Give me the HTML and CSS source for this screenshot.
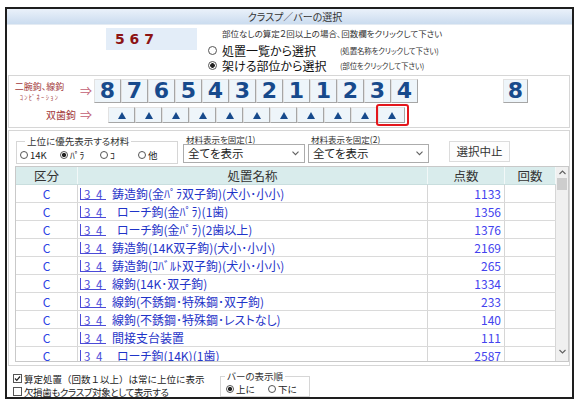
FILE: index.html
```html
<!DOCTYPE html>
<html lang="ja">
<head>
<meta charset="utf-8">
<title>クラスプ／バーの選択</title>
<link rel="stylesheet" href="styles.css">
</head>
<body>
<div class="window">
  <div class="titlebar">クラスプ／バーの選択</div>

  <div class="top">
    <div class="count">5 6 7</div>
    <div class="mode">
      <div class="note">部位なしの算定２回以上の場合、回数欄をクリックして下さい</div>
      <div class="opt"><span class="radio"></span><span class="optlabel">処置一覧から選択</span><span class="hint">(処置名称をクリックして下さい)</span></div>
      <div class="opt"><span class="radio on"></span><span class="optlabel">架ける部位から選択</span><span class="hint">(部位をクリックして下さい)</span></div>
    </div>
  </div>

  <div class="group teeth">
    <div class="trow keyrow">
      <div class="tlabel two"><span class="l1">二腕鉤、線鉤</span><span class="combi">ｺﾝﾋﾞﾈｰｼｮﾝ</span></div>
      <span class="arrow">⇒</span>
      <div class="keys">
        <div class="key">8</div><div class="key">7</div><div class="key">6</div><div class="key">5</div>
        <div class="key">4</div><div class="key">3</div><div class="key">2</div><div class="key">1</div>
        <div class="key">1</div><div class="key">2</div><div class="key">3</div><div class="key">4</div>
      </div>
      <div class="key single">8</div>
    </div>
    <div class="trow trirow">
      <div class="tlabel one">双歯鉤</div>
      <span class="arrow">⇒</span>
      <div class="tris">
        <div class="tri"><svg width="8" height="7" viewBox="0 0 8 7"><polygon points="4,0 8,7 0,7"/></svg></div>
        <div class="tri"><svg width="8" height="7" viewBox="0 0 8 7"><polygon points="4,0 8,7 0,7"/></svg></div>
        <div class="tri"><svg width="8" height="7" viewBox="0 0 8 7"><polygon points="4,0 8,7 0,7"/></svg></div>
        <div class="tri"><svg width="8" height="7" viewBox="0 0 8 7"><polygon points="4,0 8,7 0,7"/></svg></div>
        <div class="tri"><svg width="8" height="7" viewBox="0 0 8 7"><polygon points="4,0 8,7 0,7"/></svg></div>
        <div class="tri"><svg width="8" height="7" viewBox="0 0 8 7"><polygon points="4,0 8,7 0,7"/></svg></div>
        <div class="tri"><svg width="8" height="7" viewBox="0 0 8 7"><polygon points="4,0 8,7 0,7"/></svg></div>
        <div class="tri"><svg width="8" height="7" viewBox="0 0 8 7"><polygon points="4,0 8,7 0,7"/></svg></div>
        <div class="tri"><svg width="8" height="7" viewBox="0 0 8 7"><polygon points="4,0 8,7 0,7"/></svg></div>
        <div class="tri"><svg width="8" height="7" viewBox="0 0 8 7"><polygon points="4,0 8,7 0,7"/></svg></div>
        <div class="tri selected"><svg width="8" height="7" viewBox="0 0 8 7"><polygon points="4,0 8,7 0,7"/></svg><div class="hl"></div></div>
      </div>
    </div>
  </div>

  <div class="group list">
    <div class="filters">
      <fieldset class="prio">
        <legend>上位に優先表示する材料</legend>
        <div class="ropts">
          <span class="ropt w40"><span class="radio sm"></span>14K</span>
          <span class="ropt w40"><span class="radio sm on"></span>ﾊﾟﾗ</span>
          <span class="ropt w38"><span class="radio sm"></span>ｺ</span>
          <span class="ropt"><span class="radio sm"></span>他</span>
        </div>
      </fieldset>
      <div class="fix fix1">
        <div class="fixlabel">材料表示を固定(1)</div>
        <div class="combo"><span>全てを表示</span><svg class="chev" width="7" height="5" viewBox="0 0 7 5"><polyline points="0.5,0.7 3.5,3.7 6.5,0.7"/></svg></div>
      </div>
      <div class="fix fix2">
        <div class="fixlabel">材料表示を固定(2)</div>
        <div class="combo"><span>全てを表示</span><svg class="chev" width="7" height="5" viewBox="0 0 7 5"><polyline points="0.5,0.7 3.5,3.7 6.5,0.7"/></svg></div>
      </div>
      <div class="btn">選択中止</div>
    </div>

    <div class="table">
      <div class="cols">
        <div class="thead">
          <div class="th">区分</div><div class="th">処置名称</div><div class="th">点数</div><div class="th">回数</div>
        </div>
        <div class="tbody">
          <div class="tr"><div class="td kb">C</div><div class="td nm"><span class="site">3 4</span><span class="name">鋳造鉤(金ﾊﾟﾗ双子鉤)(犬小･小小)</span></div><div class="td pt">1133</div><div class="td ct"></div></div>
          <div class="tr"><div class="td kb">C</div><div class="td nm"><span class="site">3 4</span><span class="name ind">ローチ鉤(金ﾊﾟﾗ)(1歯)</span></div><div class="td pt">1356</div><div class="td ct"></div></div>
          <div class="tr"><div class="td kb">C</div><div class="td nm"><span class="site">3 4</span><span class="name ind">ローチ鉤(金ﾊﾟﾗ)(2歯以上)</span></div><div class="td pt">1376</div><div class="td ct"></div></div>
          <div class="tr"><div class="td kb">C</div><div class="td nm"><span class="site">3 4</span><span class="name">鋳造鉤(14K双子鉤)(犬小･小小)</span></div><div class="td pt">2169</div><div class="td ct"></div></div>
          <div class="tr"><div class="td kb">C</div><div class="td nm"><span class="site">3 4</span><span class="name">鋳造鉤(ｺﾊﾞﾙﾄ双子鉤)(犬小･小小)</span></div><div class="td pt">265</div><div class="td ct"></div></div>
          <div class="tr"><div class="td kb">C</div><div class="td nm"><span class="site">3 4</span><span class="name">線鉤(14K･双子鉤)</span></div><div class="td pt">1334</div><div class="td ct"></div></div>
          <div class="tr"><div class="td kb">C</div><div class="td nm"><span class="site">3 4</span><span class="name">線鉤(不銹鋼･特殊鋼･双子鉤)</span></div><div class="td pt">233</div><div class="td ct"></div></div>
          <div class="tr"><div class="td kb">C</div><div class="td nm"><span class="site">3 4</span><span class="name">線鉤(不銹鋼･特殊鋼･レストなし)</span></div><div class="td pt">140</div><div class="td ct"></div></div>
          <div class="tr"><div class="td kb">C</div><div class="td nm"><span class="site">3 4</span><span class="name">間接支台装置</span></div><div class="td pt">111</div><div class="td ct"></div></div>
          <div class="tr"><div class="td kb">C</div><div class="td nm"><span class="site">3 4</span><span class="name ind">ローチ鉤(14K)(1歯)</span></div><div class="td pt">2587</div><div class="td ct"></div></div>
        </div>
      </div>
      <div class="scroll">
        <div class="sb-arrow"><svg width="7" height="5" viewBox="0 0 7 5"><polyline points="0.5,4 3.5,1 6.5,4"/></svg></div>
        <div class="thumb"></div>
        <div class="sb-track"></div>
        <div class="sb-arrow down"><svg width="7" height="5" viewBox="0 0 7 5"><polyline points="0.5,1 3.5,4 6.5,1"/></svg></div>
      </div>
    </div>
  </div>

  <div class="bottom">
    <div class="checks">
      <div class="chk wide"><span class="box"><svg width="7" height="7" viewBox="0 0 7 7"><polyline points="1,3.5 2.8,5.3 6,1.5"/></svg></span><span class="ctext">算定処置（回数１以上）は常に上位に表示</span></div>
      <div class="chk narrow"><span class="box"></span><span class="ctext">欠損歯もクラスプ対象として表示する</span></div>
    </div>
    <fieldset class="bar">
      <legend>バーの表示順</legend>
      <div class="ropts">
        <span class="ropt w42"><span class="radio sm on"></span>上に</span>
        <span class="ropt"><span class="radio sm"></span>下に</span>
      </div>
    </fieldset>
  </div>
</div>
</body>
</html>
```

FILE: styles.css
```css
* { box-sizing: border-box; }

body {
  margin: 0;
  background: #fff;
  font-family: "Noto Sans CJK JP", "Noto Sans", sans-serif;
  font-feature-settings: "palt" 1;
  color: #222;
}

.window {
  margin: 7px 0 0 5px;
  width: 569px;
  height: 392px;
  border: 2px solid #1e1e1e;
  display: flex;
  flex-direction: column;
  background: #fff;
}

.titlebar {
  flex: none;
  height: 16px;
  background: linear-gradient(#eaf1fa, #cbdcef);
  border-bottom: 1px solid #e4ebf3;
  text-align: center;
  font-size: 10px;
  line-height: 15px;
  color: #333;
  padding-left: 11px;
}

/* top area */
.top {
  flex: none;
  height: 50px;
  display: flex;
  padding-top: 3px;
}
.count {
  margin-left: 99px;
  width: 91px;
  height: 22px;
  background: #e3edf8;
  color: #8c1414;
  font-family: "DejaVu Sans", sans-serif;
  font-feature-settings: normal;
  font-weight: bold;
  font-size: 14px;
  line-height: 22px;
  padding-left: 9px;
}
.mode {
  margin-left: 11px;
  display: flex;
  flex-direction: column;
}
.note {
  padding-left: 14px;
  font-size: 8.5px;
  line-height: 10px;
  height: 15px;
  color: #333;
}
.opt {
  display: flex;
  align-items: center;
  height: 15px;
  line-height: 15px;
}
.optlabel {
  margin-left: 5px;
  width: 118px;
  font-size: 12px;
  line-height: 15px;
  color: #111;
}
.hint {
  font-size: 7.5px;
  letter-spacing: -0.2px;
  line-height: 10px;
  color: #333;
}

.radio {
  flex: none;
  display: inline-block;
  width: 9px;
  height: 9px;
  border: 1px solid #555;
  border-radius: 50%;
  background: #fff;
}
.radio.on {
  background: radial-gradient(circle, #222 0 2px, #fff 2.6px);
}
.radio.sm {
  width: 8px;
  height: 8px;
  margin-right: 2px;
}
.radio.sm.on {
  background: radial-gradient(circle, #222 0 1.8px, #fff 2.4px);
}

/* group boxes */
.group {
  flex: none;
  margin: 0 2px 0 1px;
  border: 1px solid #d6d6d6;
}

.teeth {
  height: 53px;
  padding-top: 3px;
  display: flex;
  flex-direction: column;
  gap: 4px;
}
.trow {
  display: flex;
  align-items: center;
}
.keyrow { height: 24px; }
.trirow { height: 16px; }

.tlabel {
  width: 69px;
  color: #a33a3a;
}
.tlabel.two {
  display: flex;
  flex-direction: column;
  align-items: center;
  padding-right: 8px;
}
.tlabel .l1 {
  font-size: 9px;
  line-height: 11px;
}
.tlabel .combi {
  margin-top: 1px;
  font-size: 6.5px;
  letter-spacing: 1.3px;
  font-feature-settings: normal;
  line-height: 9px;
}
.tlabel.one {
  text-align: right;
  padding-right: 2px;
  font-size: 10px;
  line-height: 16px;
}
.arrow {
  width: 16px;
  text-align: center;
  font-size: 12px;
  line-height: 16px;
  color: #c25d72;
  font-feature-settings: normal;
}

.keys { display: flex; }
.key {
  width: 27px;
  height: 24px;
  border: 1px solid;
  border-color: #e2e2e2 #a6a6a6 #a6a6a6 #e2e2e2;
  background: #eef5fa;
  color: #174a8c;
  font-family: "DejaVu Sans", sans-serif;
  font-feature-settings: normal;
  font-weight: bold;
  font-size: 22px;
  line-height: 22px;
  text-align: center;
}
.key.single {
  width: 25px;
  margin-left: 85px;
}

.tris {
  display: flex;
  margin-left: 14px;
}
.tri {
  position: relative;
  width: 27px;
  height: 16px;
  border: 1px solid;
  border-color: #e2e2e2 #a6a6a6 #a6a6a6 #e2e2e2;
  background: #eef5fa;
  display: flex;
  align-items: center;
  justify-content: center;
}
.tri svg { fill: #174a8c; }
.tri .hl {
  position: absolute;
  left: -3px;
  right: -5px;
  top: -4px;
  bottom: -4px;
  border: 2.5px solid #e3161c;
  border-radius: 3px;
}

/* list group */
.list {
  margin-top: 2px;
  height: 236px;
  padding-bottom: 3px;
  display: flex;
  flex-direction: column;
}
.filters {
  height: 35px;
  display: flex;
  align-items: flex-start;
}
fieldset {
  margin: 0;
  padding: 0;
  border: 1px solid #d6d6d6;
  min-width: 0;
}
legend {
  font-size: 9.5px;
  line-height: 11px;
  padding: 0 2px;
  color: #333;
}
.prio {
  margin-left: 7px;
  margin-top: 5px;
  width: 162px;
}
.prio legend { margin-left: 8px; }
.ropts {
  display: flex;
  align-items: center;
  font-size: 9.5px;
  line-height: 12px;
  color: #222;
}
.prio .ropts {
  height: 16px;
  padding-left: 3px;
}
.ropt {
  display: flex;
  align-items: center;
}
.w40 { width: 40px; }
.w38 { width: 38px; }
.w42 { width: 42px; }

.fix {
  margin-top: 4px;
  display: flex;
  flex-direction: column;
}
.fix1 { margin-left: 5px; width: 122px; }
.fix2 { margin-left: 3px; width: 121px; }
.fixlabel {
  height: 9px;
  font-size: 8.5px;
  line-height: 9px;
  padding-left: 3px;
  color: #333;
  white-space: nowrap;
}
.combo {
  height: 19px;
  border: 1px solid #acacac;
  background: #fff;
  display: flex;
  align-items: center;
  justify-content: space-between;
  padding: 0 5px 0 4px;
  font-size: 11.5px;
  line-height: 15px;
  color: #222;
}
.chev polyline, .sb-arrow polyline {
  fill: none;
  stroke: #606060;
  stroke-width: 1.1;
}
.btn {
  margin-left: 20px;
  margin-top: 10px;
  width: 61px;
  height: 21px;
  border: 1px solid #dcdcdc;
  background: #fdfdfd;
  text-align: center;
  font-size: 11.5px;
  line-height: 19px;
  color: #333;
}

/* table */
.table {
  margin-left: 6px;
  width: 554px;
  height: 196px;
  border: 1px solid #c9c9c9;
  display: flex;
}
.cols {
  width: 540px;
  overflow: hidden;
}
.thead, .tr {
  display: grid;
  grid-template-columns: 62px 350px 77px 51px;
  height: 18px;
}
.thead {
  background: #d9ecec;
  border-bottom: 1px solid #c9dede;
}
.th {
  border-right: 1px solid #f2f8f8;
  text-align: center;
  font-size: 12.5px;
  line-height: 17px;
  color: #333;
}
.tr {
  border-bottom: 1px solid #dadada;
}
.td {
  border-right: 1px solid #d6d6d6;
  display: flex;
  align-items: center;
  font-size: 12px;
  line-height: 15px;
  white-space: nowrap;
  overflow: hidden;
}
.kb {
  justify-content: center;
  color: #2c44e4;
}
.nm {
  padding-left: 2px;
  color: #1f34c8;
}
.site {
  display: inline-block;
  flex: none;
  width: 26px;
  height: 12px;
  line-height: 12px;
  border-left: 1px solid #4a4ad8;
  border-bottom: 1px solid #4a4ad8;
  padding-left: 3px;
  word-spacing: 3px;
  color: #4a4ad8;
  margin-right: 6px;
  font-size: 11.5px;
}
.name.ind { padding-left: 5px; }
.pt {
  justify-content: flex-end;
  padding-right: 3px;
  color: #4343ee;
}

.scroll {
  width: 12px;
  background: #f0f0f0;
  display: flex;
  flex-direction: column;
  align-items: center;
}
.sb-arrow {
  height: 11px;
  display: flex;
  align-items: center;
  justify-content: center;
}
.sb-arrow.down { height: 14px; align-items: flex-start; padding-top: 2px; }
.thumb {
  width: 10px;
  height: 12px;
  background: #cdcdcd;
}
.sb-track { flex: 1; }

/* bottom */
.bottom {
  flex: none;
  height: 31px;
  display: flex;
  padding-left: 6px;
}
.checks {
  width: 207px;
  padding-top: 6px;
}
.chk {
  height: 13px;
  display: flex;
  align-items: center;
  color: #222;
  white-space: nowrap;
}
.ctext {
  font-size: 9.5px;
  line-height: 12px;
}
.chk.wide .ctext {
  font-feature-settings: normal;
}
.chk.narrow .ctext {
  letter-spacing: -0.4px;
}
.box {
  flex: none;
  width: 9px;
  height: 9px;
  border: 1px solid #555;
  margin-right: 2px;
  display: flex;
  align-items: center;
  justify-content: center;
  background: #fff;
}
.box polyline {
  fill: none;
  stroke: #222;
  stroke-width: 1.2;
}
.bar {
  margin-top: 5px;
  width: 90px;
  height: 26px;
}
.bar legend { margin-left: 4px; }
.bar .ropts {
  height: 14px;
  padding-left: 5px;
}
```
